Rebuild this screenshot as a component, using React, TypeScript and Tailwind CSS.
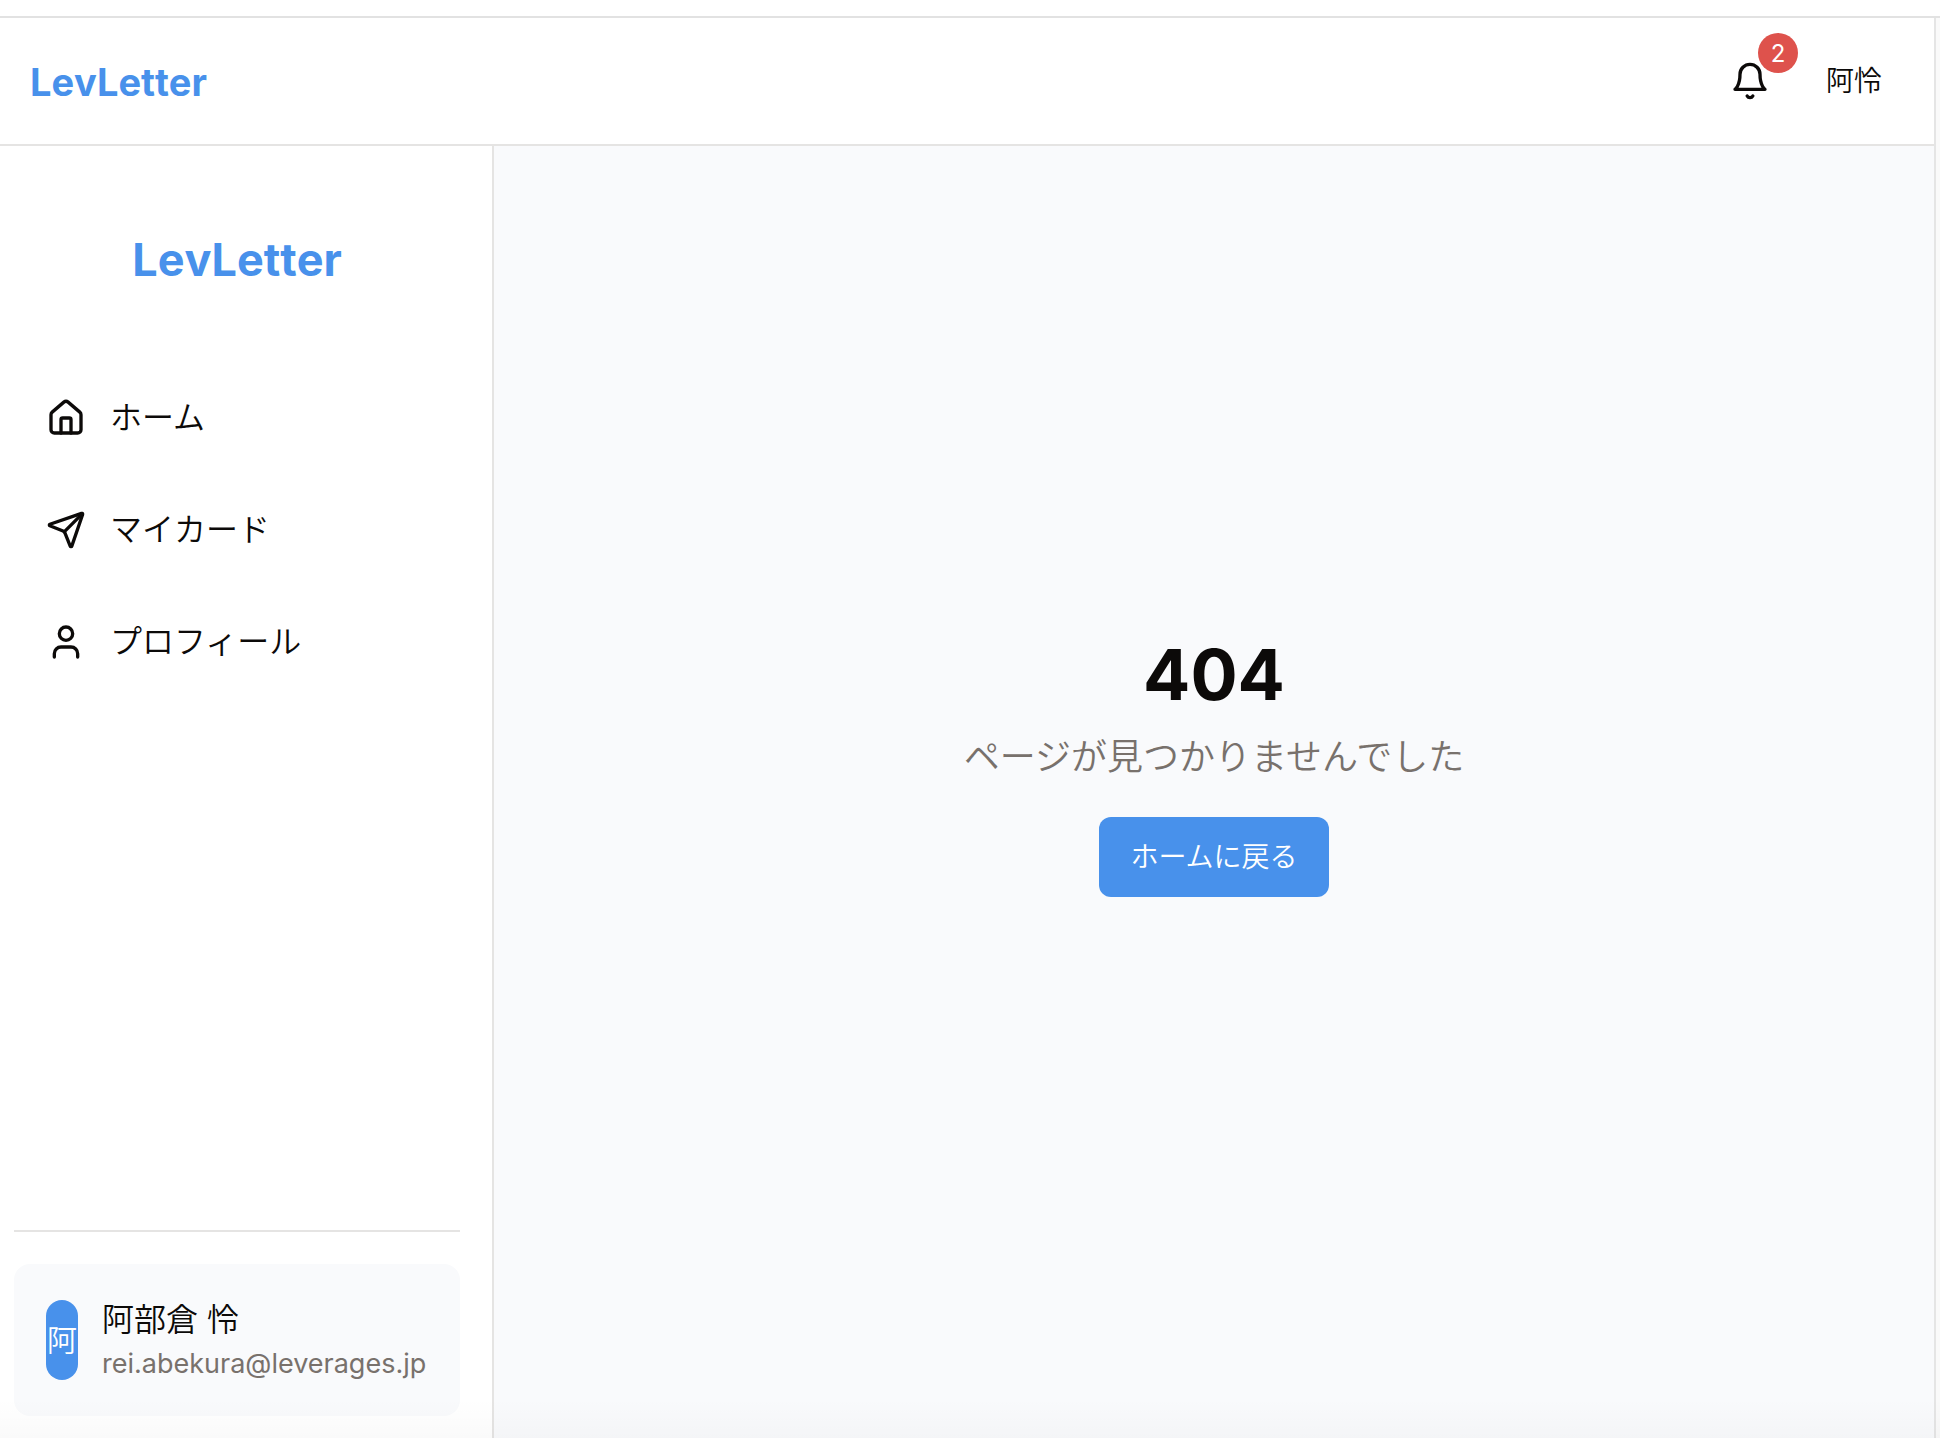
import React from "react";
import { House, Send, User } from "lucide-react";

const navItems = [
  { label: "ホーム", icon: House },
  { label: "マイカード", icon: Send },
  { label: "プロフィール", icon: User },
];

function BellIcon() {
  return (
    <svg
      className="size-10"
      viewBox="0 0 24 24"
      fill="none"
      stroke="currentColor"
      strokeWidth="2"
      strokeLinecap="round"
      strokeLinejoin="round"
      aria-hidden="true"
    >
      <path d="M6 8a6 6 0 0 1 12 0c0 7 3 9 3 9H3s3-2 3-9" />
      <path d="M10.3 21a1.94 1.94 0 0 0 3.4 0" />
    </svg>
  );
}

function Header() {
  return (
    <header className="flex h-32 items-center justify-between border-b-2 border-[#e5e4e3] bg-white pl-[30px] pr-[52px]">
      <a
        href="#"
        className="pt-0.5 text-[38px] leading-12 font-bold text-[#4891eb] [font-kerning:none]"
      >
        LevLetter
      </a>
      <div className="flex items-center gap-14">
        <button type="button" aria-label="通知" className="relative block">
          <BellIcon />
          <span className="absolute -top-7 left-7 flex size-10 items-center justify-center rounded-full bg-[#de524c] pt-0.5 text-2xl text-white">
            2
          </span>
        </button>
        <button type="button" className="text-[28px] leading-10 font-[350]">
          阿怜
        </button>
      </div>
    </header>
  );
}

function Sidebar() {
  return (
    <aside className="flex w-[494px] shrink-0 flex-col border-r-2 border-[#e5e4e3] bg-white pr-8 pb-[22px] pl-3.5">
      <a
        href="#"
        className="mt-20 block pt-0.5 text-center text-[45px] leading-16 font-bold text-[#4891eb] [font-kerning:none]"
      >
        LevLetter
      </a>
      <nav className="mt-[78px] flex flex-col gap-4">
        {navItems.map(({ label, icon: Icon }) => (
          <a key={label} href="#" className="flex h-24 items-center gap-6 px-8 text-[32px] font-[350]">
            <Icon className="size-10" strokeWidth={2} aria-hidden="true" />
            {label}
          </a>
        ))}
      </nav>
      <div className="mt-auto border-t-2 border-[#e5e4e3] pt-8">
        <div className="flex h-38 items-center gap-6 rounded-2xl bg-[#f9fafc] px-8">
          <span className="flex h-20 w-8 shrink-0 items-center justify-center rounded-full bg-[#4891eb] text-[30px] font-[350] text-white">
            阿
          </span>
          <div>
            <p className="text-[32px] leading-12 font-[350]">阿部倉 怜</p>
            <p className="text-[27px] leading-10 text-[#78716c]">rei.abekura@leverages.jp</p>
          </div>
        </div>
      </div>
    </aside>
  );
}

function NotFound() {
  return (
    <main className="flex flex-1 flex-col items-center justify-center bg-[#f9fafc] pb-12">
      <h1 className="text-[70px] leading-18 font-bold">404</h1>
      <p className="mt-[18px] text-[36px] leading-14 font-[350] text-[#78716c]">
        ページが見つかりませんでした
      </p>
      <a
        href="#"
        className="mt-8 flex h-20 items-center rounded-xl bg-[#4891eb] px-[31px] text-[28px] font-[350] text-white"
      >
        ホームに戻る
      </a>
    </main>
  );
}

export default function App() {
  return (
    <div className="relative flex min-h-screen flex-col bg-white pt-4 font-['Inter','Noto_Sans_CJK_JP',sans-serif] text-[#0c0a09]">
      <div className="flex flex-1 border-t-2 border-[#e2e2e2] bg-[#fafafa] pr-1">
        <div className="flex flex-1 flex-col border-r-2 border-[#e5e5e5]">
          <Header />
          <div className="flex flex-1">
            <Sidebar />
            <NotFound />
          </div>
        </div>
      </div>
      <div className="pointer-events-none absolute inset-x-0 bottom-0 h-10 bg-linear-to-t from-black/2 to-transparent" />
    </div>
  );
}
